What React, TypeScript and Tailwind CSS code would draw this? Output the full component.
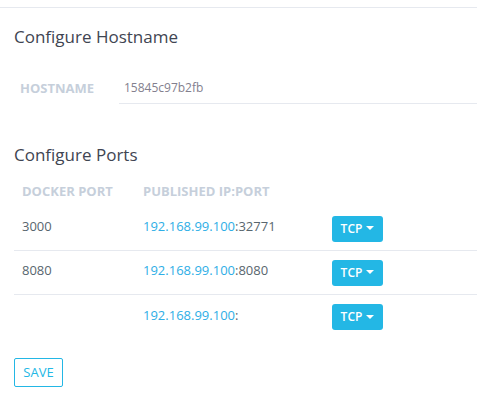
import React from "react";

const rows = [
  { port: "3000", ip: "192.168.99.100", pub: "32771" },
  { port: "8080", ip: "192.168.99.100", pub: "8080" },
  { port: "", ip: "192.168.99.100", pub: "" },
];

function TcpButton() {
  return (
    <button className="flex items-center gap-[4px] h-[26px] w-[51px] justify-center rounded-[3px] bg-[#23b7e5] text-white text-[12px] font-semibold">
      TCP
      <svg width="8" height="5" viewBox="0 0 8 5">
        <path d="M0 0 L8 0 L4 4 Z" fill="white" />
      </svg>
    </button>
  );
}

export default function App() {
  return (
    <div
      className="w-[477px] h-[416px] bg-white text-[#58666e]"
      style={{ fontFamily: '"Open Sans", "Noto Sans", sans-serif' }}
    >
      <div className="h-[8px] border-b border-[#e6e9ef]" />
      <div className="pl-[14px]">
        <h2 className="mt-[16px] text-[17px] leading-[25px] text-[#3f4552]">Configure Hostname</h2>
        <div className="mt-[24px] flex items-center">
          <div className="w-[105px] pl-[6px] text-[13px] font-bold text-[#c6cfdb]">HOSTNAME</div>
          <div className="flex-1 h-[31px] border-b border-[#e6e9ef] pl-[5px] flex items-center text-[12px] text-[#83808e]">
            15845c97b2fb
          </div>
        </div>
        <h2 className="mt-[38px] text-[17px] leading-[25px] text-[#3f4552]">Configure Ports</h2>
        <div className="mt-[14px]">
          <div className="flex h-[26px] pb-[4px] items-center text-[13px] font-bold text-[#c6cfdb]">
            <div className="w-[129px] pl-[8px]">DOCKER PORT</div>
            <div>PUBLISHED IP:PORT</div>
          </div>
          {rows.map((r, i) => (
            <div
              key={i}
              className={
                "flex items-center h-[44px] text-[13px] " +
                (i < rows.length - 1 ? "border-b border-[#e6e9ef]" : "")
              }
            >
              <div className="w-[129px] pl-[8px] pb-[3px]">{r.port}</div>
              <div className="w-[189px] pb-[3px]">
                <span className="text-[#2eaee6]">{r.ip}</span>:{r.pub}
              </div>
              <TcpButton />
            </div>
          ))}
        </div>
        <button className="mt-[19px] h-[29px] w-[49px] rounded-[2px] border border-[#23b7e5] text-[13px] text-[#23b7e5]">
          SAVE
        </button>
      </div>
    </div>
  );
}
